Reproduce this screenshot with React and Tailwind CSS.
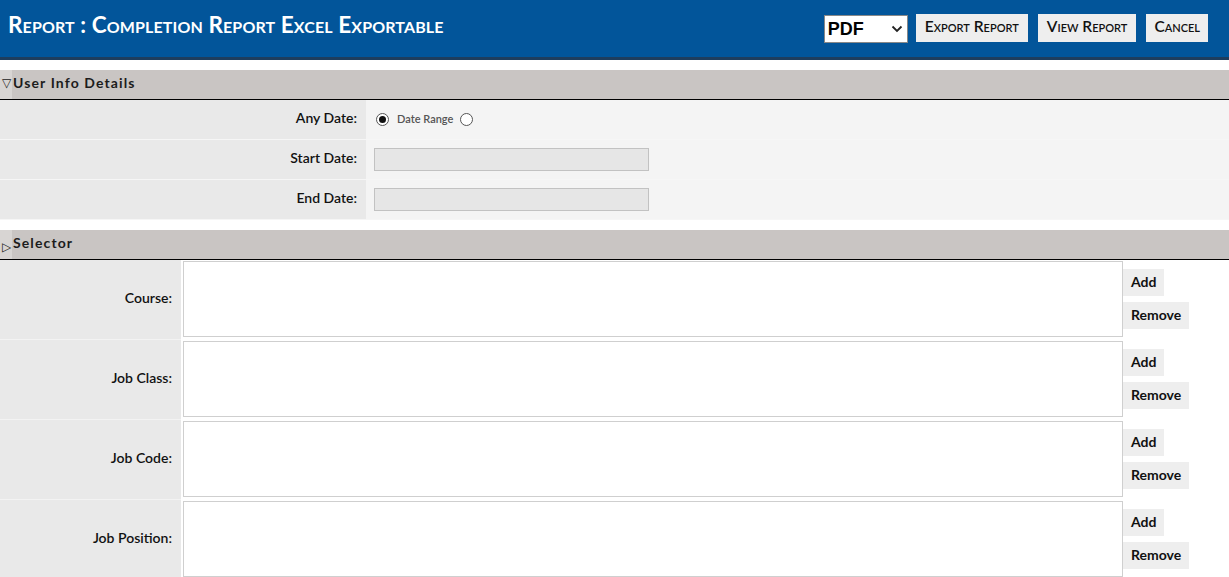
import React from 'react';

const selectorRows = ['Course:', 'Job Class:', 'Job Code:', 'Job Position:'];

function SectionHeader({ title, open }) {
  return (
    <div className="flex h-[30px] bg-[#c9c5c3] border-b border-black">
      <div className="w-[12px] bg-[#d8d5d3] flex items-center justify-center text-[#222] text-[12px] leading-none">
        {open ? <span className="mb-[4px]">▽</span> : <span className="mt-[4px]">▷</span>}
      </div>
      <div className="flex items-center pl-[1px] pb-[4px] text-[14px] font-bold tracking-[0.08em] text-[#1c1c1c]">{title}</div>
    </div>
  );
}

function DateRow({ label, children }) {
  return (
    <div className="flex h-[40px] border-b border-[#f6f6f6]">
      <div className="w-[366px] bg-[#e9e9e9] flex items-center justify-end pr-[9px] pb-[4px] text-[14px] font-semibold text-[#111]">
        {label}
      </div>
      <div className="flex-1 bg-[#f4f4f4] flex items-center pl-[8px]">{children}</div>
    </div>
  );
}

function Radio({ checked }) {
  return (
    <span className="w-[13px] h-[13px] rounded-full border border-[#555] bg-white flex items-center justify-center">
      {checked && <span className="w-[7px] h-[7px] rounded-full bg-[#111]" />}
    </span>
  );
}

export default function App() {
  return (
    <div className="min-h-[577px] bg-white font-['Lato','Open_Sans',sans-serif]">
      {/* Title bar */}
      <div className="h-[60px] bg-[#02559a] border-b-[3px] border-[#1e3d5d] flex items-start justify-between">
        <h1 className="pl-[8px] pt-[8px] text-[22.5px] font-bold text-white [font-variant:small-caps] tracking-[0.005em]">
          Report : Completion Report Excel Exportable
        </h1>
        <div className="flex items-start pt-[14px] pr-[21px]">
          <div className="mt-[1px] w-[84px] h-[28px] bg-white border border-[#888] flex items-center justify-between pl-[3px] pr-[4px]">
            <span className="font-['Liberation_Sans',sans-serif] text-[18px] font-bold text-black leading-none">PDF</span>
            <svg width="12" height="8" viewBox="0 0 12 8" fill="none" stroke="#222" strokeWidth="1.8">
              <path d="M1.5 1.5l4.5 4.5 4.5-4.5" />
            </svg>
          </div>
          <button className="ml-[8px] h-[28px] px-[9px] pb-[2px] bg-[#eeeeee] text-[15.5px] font-semibold text-[#111] [font-variant:small-caps] leading-none">
            Export Report
          </button>
          <button className="ml-[10px] h-[28px] px-[9px] pb-[2px] bg-[#eeeeee] text-[15.5px] font-semibold text-[#111] [font-variant:small-caps] leading-none">
            View Report
          </button>
          <button className="ml-[10px] h-[28px] px-[8px] pb-[2px] bg-[#eeeeee] text-[15.5px] font-semibold text-[#111] [font-variant:small-caps] leading-none">
            Cancel
          </button>
        </div>
      </div>

      {/* User info */}
      <div className="mt-[10px]">
        <SectionHeader title="User Info Details" open />
        <DateRow label="Any Date:">
          <div className="flex items-center ml-[2px]">
            <Radio checked />
            <span className="ml-[8px] text-[11px] font-semibold text-[#555]">Date Range</span>
            <span className="ml-[7px]"><Radio /></span>
          </div>
        </DateRow>
        <DateRow label="Start Date:">
          <div className="w-[275px] h-[23px] bg-[#e6e6e6] border border-[#c2c2c2]" />
        </DateRow>
        <DateRow label="End Date:">
          <div className="w-[275px] h-[23px] bg-[#e6e6e6] border border-[#c2c2c2]" />
        </DateRow>
      </div>

      {/* Selector */}
      <div className="mt-[10px]">
        <SectionHeader title="Selector" />
        {selectorRows.map((label) => (
          <div key={label} className="flex h-[80px]">
            <div className="w-[181px] bg-[#e9e9e9] border-b border-[#f3f3f3] flex items-center justify-end pr-[9px] pb-[4px] text-[14px] font-semibold text-[#111]">
              {label}
            </div>
            <div className="w-[942px] pl-[2px] pt-[1px]">
              <div className="h-[76px] border border-[#cfcfcf] bg-white" />
            </div>
            <div className="flex flex-col items-start pt-[9px] gap-[6px]">
              <button className="h-[27px] px-[8px] pb-[2px] bg-[#eeeeee] text-[14px] font-bold text-[#111]">Add</button>
              <button className="h-[27px] px-[8px] pb-[2px] bg-[#eeeeee] text-[14px] font-bold text-[#111]">Remove</button>
            </div>
          </div>
        ))}
      </div>
    </div>
  );
}
